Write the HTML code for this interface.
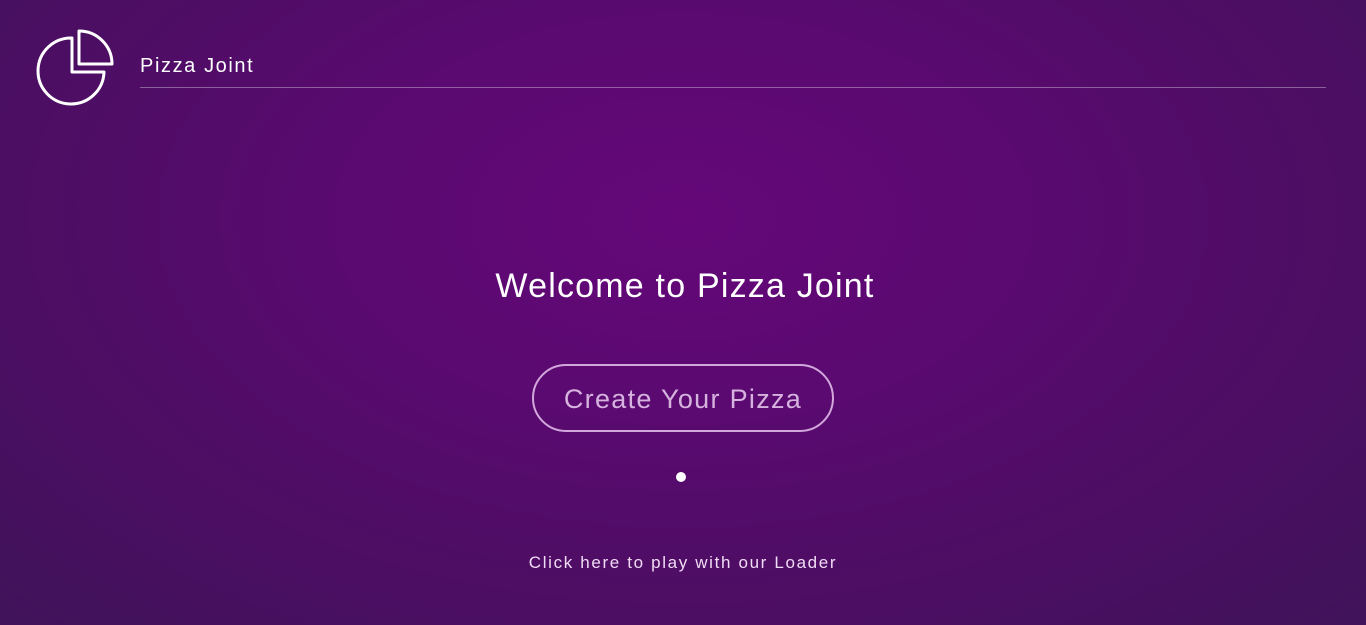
<!DOCTYPE html>
<html><head><style>
html,body{margin:0;padding:0;width:1366px;height:625px;overflow:hidden;}
body{background:radial-gradient(ellipse 70% 90% at 50% 35%,#650779 0%,#5a0a70 35%,#4c0e63 70%,#40135a 100%);font-family:"Liberation Sans",sans-serif;color:#fff;position:relative;}
.title{position:absolute;left:140px;top:55px;font-size:20px;letter-spacing:1.6px;}
.line{position:absolute;left:140px;top:87px;width:1186px;height:1px;background:rgba(255,255,255,0.35);}
h1{position:absolute;left:0;width:1366px;top:267px;margin:0;text-align:center;font-weight:normal;font-size:34px;letter-spacing:1.2px;}
.btn{position:absolute;left:532px;top:364px;width:298px;height:64px;border:2px solid #d2a8dc;border-radius:34px;box-sizing:content-box;color:#d6b2de;font-size:27px;letter-spacing:1.3px;text-align:center;line-height:66px;}
.dot{position:absolute;left:676px;top:472px;width:10px;height:10px;border-radius:50%;background:#fff;}
.foot{position:absolute;left:0;width:1366px;top:553px;text-align:center;font-size:17px;letter-spacing:1.65px;color:#f0dcf4;}
</style></head><body>
<svg style="position:absolute;left:0;top:0" width="130" height="120">
<path d="M72 38 L72 72 L104 72 A33 33 0 1 1 72 38 Z" fill="none" stroke="#fff" stroke-width="3" stroke-linejoin="round"/>
<path d="M79 31 L79 64 L112 64 A33 33 0 0 0 79 31 Z" fill="none" stroke="#fff" stroke-width="3" stroke-linejoin="round"/>
</svg>
<div class="title">Pizza Joint</div>
<div class="line"></div>
<h1 style="left:2px">Welcome to Pizza Joint</h1>
<div class="btn">Create Your Pizza</div>
<div class="dot"></div>
<div class="foot">Click here to play with our Loader</div>
</body></html>
